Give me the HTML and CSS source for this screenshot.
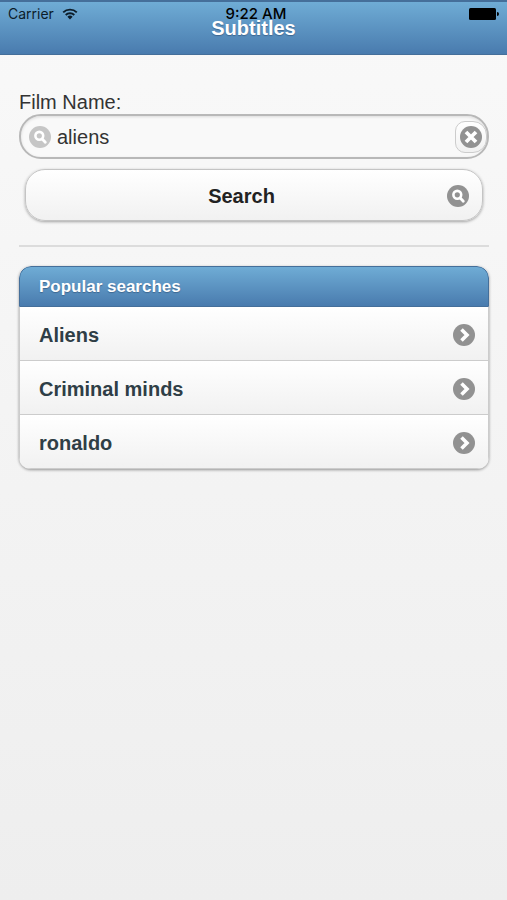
FILE: index.html
```html
<!DOCTYPE html>
<html lang="en">
<head>
<meta charset="utf-8">
<meta name="viewport" content="width=device-width, initial-scale=1">
<title>Subtitles</title>
<link rel="stylesheet" href="styles.css">
</head>
<body>
<svg class="symbols" aria-hidden="true">
  <symbol id="lens" viewBox="0 0 22 22">
    <circle cx="11" cy="11" r="11" fill="currentColor"/>
    <circle cx="10.300" cy="9.800" r="3.900" fill="none" stroke="#fff" stroke-width="2.600"/>
    <path d="M13.200 13l3.100 3.200" stroke="#fff" stroke-width="2.800" stroke-linecap="round"/>
  </symbol>
  <symbol id="cross" viewBox="0 0 22 22">
    <circle cx="11" cy="11" r="11" fill="currentColor"/>
    <path d="M6 6l10 10M16 6l-10 10" stroke="#fff" stroke-width="3.800"/>
  </symbol>
  <symbol id="arrow" viewBox="0 0 22 22">
    <circle cx="11" cy="11" r="11" fill="currentColor"/>
    <path d="M8.500 5.500l5.500 5.500-5.500 5.500" fill="none" stroke="#fff" stroke-width="3.600"/>
  </symbol>
</svg>

<div class="status">
  <span class="carrier">Carrier
    <svg class="wifi" viewBox="0 0 16 12" aria-hidden="true">
      <path d="M1.200 4.400a9.800 9.800 0 0 1 13.600 0M3.700 7a6.200 6.200 0 0 1 8.600 0" fill="none" stroke="currentColor" stroke-width="1.900"/>
      <path d="M5.400 8.700a3.900 3.900 0 0 1 5.200 0L8 11.400z" fill="currentColor"/>
    </svg>
  </span>
  <span class="time">9:22 AM</span>
  <svg class="battery" viewBox="0 0 30 12" aria-hidden="true">
    <rect width="27" height="12" rx="1.500"/>
    <path d="M28 4q2 0 2 2t-2 2z"/>
  </svg>
</div>

<header class="bar"><h1>Subtitles</h1></header>

<main>
  <form>
    <label for="film">Film Name:</label>
    <div class="field">
      <svg class="icon pale" aria-hidden="true"><use href="#lens"/></svg>
      <input id="film" type="text" value="aliens">
      <button class="clear" type="reset" aria-label="Clear text"><svg class="icon" aria-hidden="true"><use href="#cross"/></svg></button>
    </div>
    <button class="search" type="button"><span>Search</span><svg class="icon" aria-hidden="true"><use href="#lens"/></svg></button>
  </form>

  <section class="list">
    <h2>Popular searches</h2>
    <ul>
      <li><a href="#">Aliens<svg class="icon" aria-hidden="true"><use href="#arrow"/></svg></a></li>
      <li><a href="#">Criminal minds<svg class="icon" aria-hidden="true"><use href="#arrow"/></svg></a></li>
      <li><a href="#">ronaldo<svg class="icon" aria-hidden="true"><use href="#arrow"/></svg></a></li>
    </ul>
  </section>
</main>
</body>
</html>
```
FILE: styles.css
```css
* {
  box-sizing: border-box;
}

body {
  margin: 0;
  min-height: 100vh;
  background: linear-gradient(#f9f9f9, #eee);
  color: #333;
  font: 20px/24px "Liberation Sans", Arial, sans-serif;
}

.symbols {
  display: none;
}

.icon {
  flex: none;
  width: 22px;
  height: 22px;
  color: #929292;
}

.pale {
  color: #c6c6c6;
}

.status {
  position: absolute;
  top: 0;
  left: 0;
  right: 0;
  display: grid;
  grid-template-columns: 1fr auto 1fr;
  align-items: center;
  padding: 4px 8px;
  color: #000;
  font: 14px/20px Inter, sans-serif;
}

.carrier {
  display: flex;
  align-items: center;
  gap: 8px;
  color: #0c1c29;
}

.wifi {
  width: 16px;
  height: 12px;
}

.time {
  padding-left: 5px;
  font-size: 15px;
  font-weight: 500;
}

.battery {
  justify-self: end;
  width: 30px;
  height: 12px;
}

.bar {
  padding: 14px 16px;
  border: solid #456f9a;
  border-width: 2px 0 1px;
  background: linear-gradient(#6facd5, #497bae);
  text-align: center;
}

h1,
h2 {
  margin: 0;
  color: #fff;
  text-shadow: 0 1px 1px #3e6790;
}

h1 {
  font-size: 20px;
  line-height: 24px;
}

main {
  padding: 35px 18px 18px 19px;
}

form {
  padding-bottom: 24px;
  border-bottom: 2px solid #dcdcdc;
}

label {
  display: block;
}

.field {
  display: flex;
  align-items: center;
  height: 45px;
  padding-left: 8px;
  border: 2px solid #b8b8b8;
  border-radius: 22px;
  background: #f9f9f9;
  box-shadow: inset 0 1px 3px rgba(0, 0, 0, .12);
}

.field input {
  flex: 1;
  min-width: 0;
  height: 40px;
  padding: 2px 6px 0;
  border: 0;
  outline: 0;
  background: none;
  color: #333;
  font: inherit;
}

.clear {
  display: grid;
  place-items: center;
  width: 32px;
  height: 32px;
  padding: 0;
  border: 1px solid #ccc;
  border-radius: 10px 14px 14px 10px;
  background: linear-gradient(#fff, #f1f1f1);
}

.search {
  display: flex;
  align-items: center;
  width: calc(100% - 12px);
  height: 52px;
  margin: 10px 6px 0;
  padding: 2px 13px 0 10px;
  border: 1px solid #c4c4c4;
  border-radius: 20px;
  background: linear-gradient(#fff, #f1f1f1);
  box-shadow: 0 1px 3px rgba(0, 0, 0, .35);
  color: #222;
  font: bold 20px/24px "Liberation Sans", Arial, sans-serif;
}

.search span {
  flex: 1;
}

.list {
  margin-top: 19px;
  overflow: hidden;
  border-radius: 12px;
  box-shadow: 0 1px 3px rgba(0, 0, 0, .4);
}

h2 {
  padding: 9px 19px;
  border: 1px solid #456f9a;
  border-radius: 12px 12px 0 0;
  background: linear-gradient(#6facd5, #497bae);
  font-size: 17px;
  line-height: 21px;
}

ul {
  margin: 0;
  padding: 0;
  border: solid #ccc;
  border-width: 0 1px 1px;
  border-radius: 0 0 12px 12px;
  list-style: none;
}

li + li {
  border-top: 1px solid #ccc;
}

li a {
  display: flex;
  align-items: center;
  justify-content: space-between;
  height: 53px;
  padding: 2px 13px 0 19px;
  background: linear-gradient(#fff, #f1f1f1);
  color: #2f3e46;
  font-weight: bold;
  text-decoration: none;
}
```
